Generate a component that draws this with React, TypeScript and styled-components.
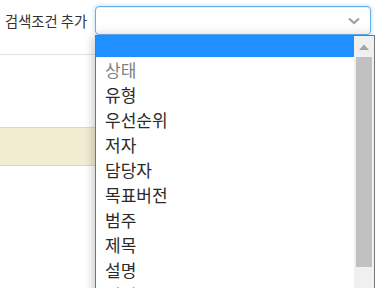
import React from "react";
import styled, { createGlobalStyle } from "styled-components";

const Global = createGlobalStyle`
  html, body { margin: 0; padding: 0; background: #fff; }
  body { font-family: "Noto Sans CJK KR", "Noto Sans", sans-serif; }
`;

const Page = styled.div`
  position: relative;
  width: 375px;
  height: 288px;
  overflow: hidden;
  background: #fff;
`;

const TopBar = styled.div`
  display: flex;
  align-items: center;
  gap: 8px;
  padding: 6px 4px 0 5px;
`;

const Label = styled.span`
  font-size: 14.3px;
  color: #333;
  line-height: 29px;
  white-space: nowrap;
`;

const SelectBox = styled.div`
  flex: 1;
  height: 29px;
  box-sizing: border-box;
  border: 1px solid #66afe9;
  border-radius: 4px;
  background: linear-gradient(#fff 60%, #f4f4f4);
  box-shadow: inset 0 1px 1px rgba(0, 0, 0, 0.075), 0 0 4px rgba(102, 175, 233, 0.5);
  display: flex;
  align-items: center;
  justify-content: flex-end;
  padding-right: 10px;
`;

const Divider = styled.div`
  margin-top: 19px;
  border-top: 1px solid #e3e3e3;
`;

const Notice = styled.div`
  margin-top: 72px;
  height: 37px;
  background: #f2ecd2;
  border-top: 1px solid #e8d6b2;
  border-bottom: 1px solid #e8d6b2;
`;

const Dropdown = styled.div`
  position: absolute;
  left: 95px;
  top: 35px;
  width: 280px;
  height: 260px;
  box-sizing: border-box;
  border: 1px solid #767676;
  background: #fff;
  box-shadow: -3px 2px 8px rgba(0, 0, 0, 0.18);
  display: flex;
`;

const List = styled.ul`
  flex: 1;
  margin: 0;
  padding: 0;
  list-style: none;
`;

const Option = styled.li<{ $active?: boolean; $disabled?: boolean; $blank?: boolean }>`
  height: ${(p) => (p.$blank ? "21px" : "25px")};
  line-height: 25px;
  padding-left: 9px;
  font-size: 17px;
  color: ${(p) => (p.$disabled ? "#808080" : "#2a2a2a")};
  background: ${(p) => (p.$active ? "#1e90ff" : "transparent")};
  white-space: nowrap;
`;

const Scrollbar = styled.div`
  width: 20px;
  background: #f0f0f0;
  display: flex;
  flex-direction: column;
  align-items: center;
`;

const ArrowBtn = styled.div`
  height: 21px;
  width: 100%;
  display: flex;
  align-items: center;
  justify-content: center;
`;

const Thumb = styled.div`
  width: 16px;
  height: 210px;
  background: #c1c1c1;
`;

const items = ["상태", "유형", "우선순위", "저자", "담당자", "목표버전", "범주", "제목", "설명", "진척도"];

export default function App() {
  return (
    <Page>
      <Global />
      <TopBar>
        <Label>검색조건 추가</Label>
        <SelectBox>
          <svg width="12" height="8" viewBox="0 0 12 8">
            <polyline points="1,1.5 6,6 11,1.5" fill="none" stroke="#a0a0a0" strokeWidth="2.2" />
          </svg>
        </SelectBox>
      </TopBar>
      <Divider />
      <Notice />
      <Dropdown>
        <List>
          <Option $active $blank />
          {items.map((t, i) => (
            <Option key={t} $disabled={i === 0}>
              {t}
            </Option>
          ))}
        </List>
        <Scrollbar>
          <ArrowBtn>
            <svg width="10" height="6" viewBox="0 0 10 6">
              <polygon points="0,6 5,0.5 10,6" fill="#a3a3a3" />
            </svg>
          </ArrowBtn>
          <Thumb />
        </Scrollbar>
      </Dropdown>
    </Page>
  );
}
